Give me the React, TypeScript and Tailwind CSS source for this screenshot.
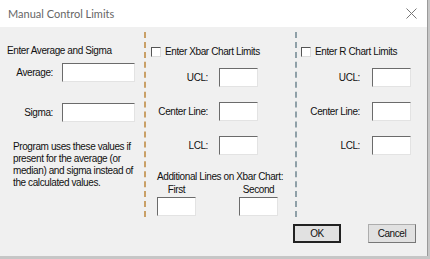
import { ReactNode } from "react"

const ui = { fontFamily: "'Liberation Sans', Arial, sans-serif" }

function Field({ w, h = 19 }: { w: number; h?: number }) {
    return <div
        className="bg-white border-t border-l border-b border-r border-t-[#6b6b6b] border-l-[#6b6b6b] border-b-[#e3e3e3] border-r-[#e3e3e3] shrink-0"
        style={{ width: w, height: h }}
    />
}

function Check({ label }: { label: string }) {
    return <div className="flex flex-row items-center gap-[4px] h-[13px]">
        <div className="w-[10px] h-[10px] bg-white border-t border-l border-t-[#555] border-l-[#555] border-b border-r border-b-[#dcdcdc] border-r-[#dcdcdc]" />
        <span>{label}</span>
    </div>
}

function Row({ label, labelW, gap, children }: { label: string; labelW: number; gap: number; children: ReactNode }) {
    return <div className="flex flex-row items-center">
        <span className="text-right shrink-0" style={{ width: labelW, marginRight: gap }}>{label}</span>
        {children}
    </div>
}

export default function App() {
    return <div className="w-[430px] h-[259px] bg-[#c6c6c6] overflow-hidden text-[10px] leading-[13px] tracking-[-0.4px] text-[#111] whitespace-nowrap" style={ui}>
        <div className="w-[428px] h-[256px] bg-[#f0f0f0] border-r border-r-[#9a9a9a] flex flex-col">
            {/* title bar */}
            <div className="h-[27px] bg-white flex flex-row items-center justify-between pl-[8px] pr-[10px] shrink-0">
                <span className="text-[11px] tracking-normal text-[#666]" style={{ fontFamily: "'Segoe UI', Lato, sans-serif" }}>Manual Control Limits</span>
                <svg width="11" height="11" viewBox="0 0 11 11"><path d="M0.5 0.5 L10.5 10.5 M10.5 0.5 L0.5 10.5" stroke="#777" strokeWidth="1" /></svg>
            </div>

            <div className="flex flex-row pt-[5px] h-[190px] shrink-0">
                {/* column 1 */}
                <div className="w-[144px] shrink-0 flex flex-col pl-[7px]">
                    <p className="mt-[12px]">Enter Average and Sigma</p>
                    <div className="mt-[6px]">
                        <Row label="Average:" labelW={46} gap={9}><Field w={73} /></Row>
                    </div>
                    <div className="mt-[21px]">
                        <Row label="Sigma:" labelW={46} gap={9}><Field w={73} /></Row>
                    </div>
                    <p className="mt-[19px] ml-[6px] leading-[12px]">
                        Program uses these values if<br />
                        present for the average (or<br />
                        median) and sigma instead of<br />
                        the calculated values.
                    </p>
                </div>
                <div className="w-0 h-[185px] border-l-2 border-dashed border-l-[#c9a067]" />

                {/* column 2 */}
                <div className="w-[149px] shrink-0 flex flex-col pl-[5px]">
                    <div className="mt-[13px]"><Check label="Enter Xbar Chart Limits" /></div>
                    <div className="mt-[10px]">
                        <Row label="UCL:" labelW={57} gap={11}><Field w={39} /></Row>
                    </div>
                    <div className="mt-[15px]">
                        <Row label="Center Line:" labelW={57} gap={11}><Field w={39} /></Row>
                    </div>
                    <div className="mt-[15px]">
                        <Row label="LCL:" labelW={57} gap={11}><Field w={39} /></Row>
                    </div>
                    <p className="mt-[15px] ml-[6px]">Additional Lines on Xbar Chart:</p>
                    <div className="flex flex-row ml-[6px]">
                        <div className="flex flex-col items-center w-[39px]">
                            <span>First</span>
                            <div className="mt-[1px]"><Field w={39} /></div>
                        </div>
                        <div className="flex flex-col items-center w-[39px] ml-[43px]">
                            <span>Second</span>
                            <div className="mt-[1px]"><Field w={39} /></div>
                        </div>
                    </div>
                </div>
                <div className="w-0 h-[185px] border-l-2 border-dashed border-l-[#8fa0a8]" />

                {/* column 3 */}
                <div className="flex-1 flex flex-col pl-[4px]">
                    <div className="mt-[13px]"><Check label="Enter R Chart Limits" /></div>
                    <div className="mt-[10px]">
                        <Row label="UCL:" labelW={59} gap={12}><Field w={39} /></Row>
                    </div>
                    <div className="mt-[15px]">
                        <Row label="Center Line:" labelW={59} gap={12}><Field w={39} /></Row>
                    </div>
                    <div className="mt-[15px]">
                        <Row label="LCL:" labelW={59} gap={12}><Field w={39} /></Row>
                    </div>
                </div>
            </div>

            {/* buttons */}
            <div className="flex flex-row mt-[7px] pl-[293px] gap-[27px]">
                <button className="w-[48px] h-[19px] bg-[#e1e1e1] border-2 border-[#222] flex items-center justify-center">OK</button>
                <button className="w-[48px] h-[19px] bg-[#e1e1e1] border border-[#adadad] border-b-[#777] border-r-[#777] flex items-center justify-center">Cancel</button>
            </div>
        </div>
    </div>
}
